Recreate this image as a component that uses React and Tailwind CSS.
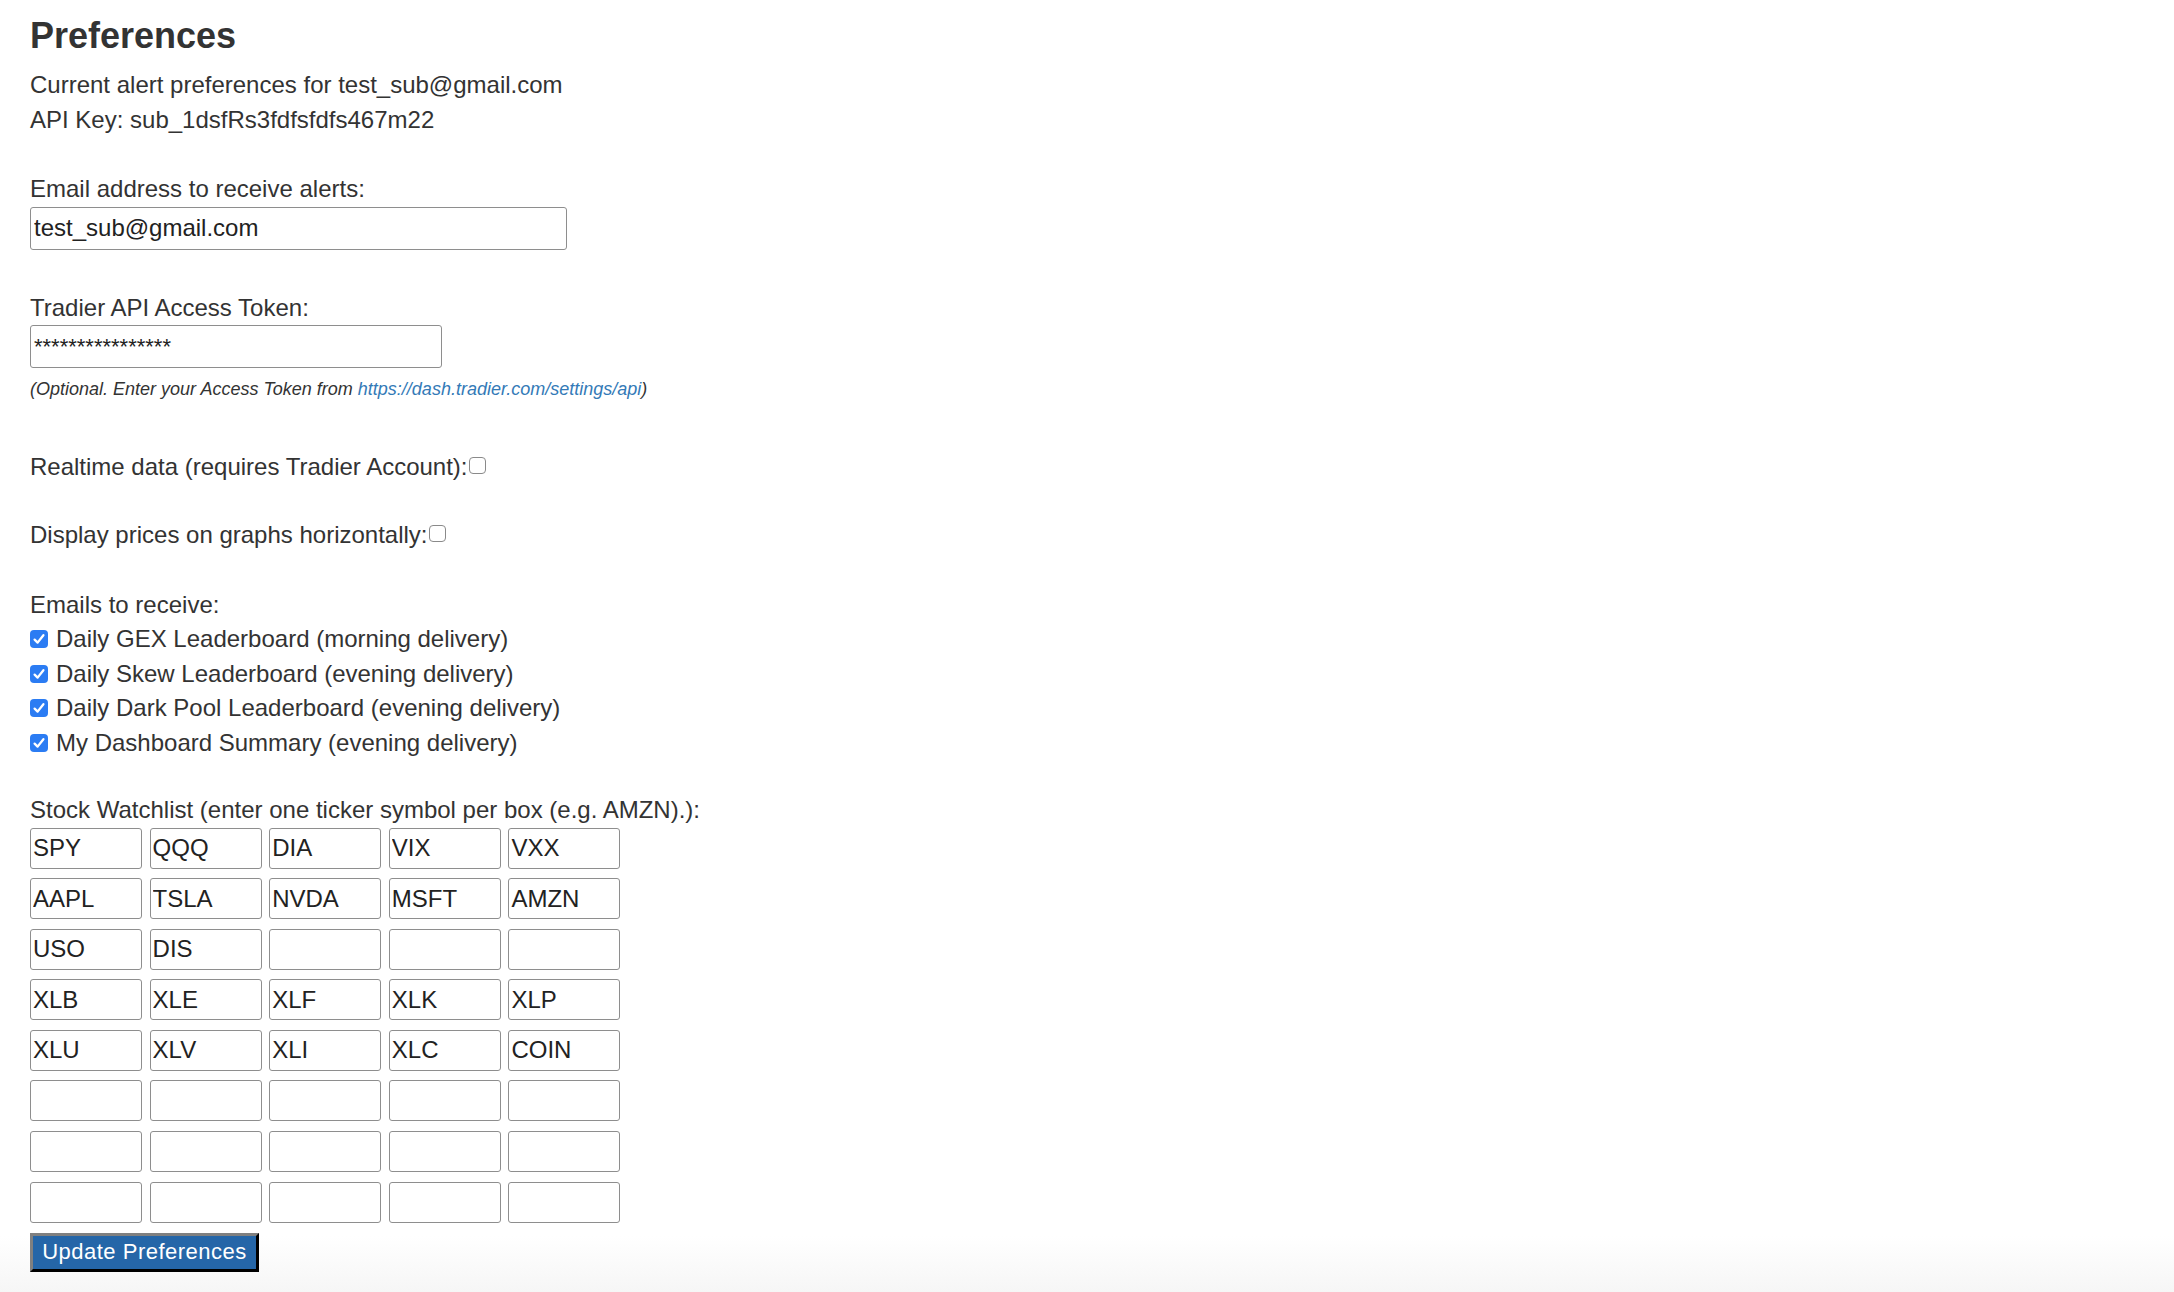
import React from "react";

const rows = [
  ["SPY", "QQQ", "DIA", "VIX", "VXX"],
  ["AAPL", "TSLA", "NVDA", "MSFT", "AMZN"],
  ["USO", "DIS", "", "", ""],
  ["XLB", "XLE", "XLF", "XLK", "XLP"],
  ["XLU", "XLV", "XLI", "XLC", "COIN"],
  ["", "", "", "", ""],
  ["", "", "", "", ""],
  ["", "", "", "", ""],
];

const emails = [
  "Daily GEX Leaderboard (morning delivery)",
  "Daily Skew Leaderboard (evening delivery)",
  "Daily Dark Pool Leaderboard (evening delivery)",
  "My Dashboard Summary (evening delivery)",
];

function CheckedBox() {
  return (
    <span className="inline-flex h-[18px] w-[18px] shrink-0 items-center justify-center rounded-[4px] bg-[#2b7cf3]">
      <svg viewBox="0 0 18 18" className="h-[18px] w-[18px]">
        <path
          d="M4.6 9.6 L7.6 12.6 L13.4 5.2"
          fill="none"
          stroke="white"
          strokeWidth="2.3"
          strokeLinecap="round"
          strokeLinejoin="round"
        />
      </svg>
    </span>
  );
}

function EmptyBox() {
  return (
    <span className="ml-[1px] mb-[3px] inline-block h-[17px] w-[17px] shrink-0 rounded-[4px] border border-[#8a8a8a] bg-white" />
  );
}

export default function App() {
  return (
    <div className="min-h-[1292px] w-full bg-[linear-gradient(to_bottom,#ffffff_0px,#ffffff_1236px,#f6f6f6_1292px)] font-['Liberation_Sans',Arial,Helvetica,sans-serif] text-[#333333]">
      <div className="flex flex-col items-start pl-[30px] pt-[16px]">
        <h1 className="text-[36px] font-bold leading-[40px]">Preferences</h1>

        <div className="mt-[12px] text-[24px] leading-[34.5px]">
          <div>Current alert preferences for test_sub@gmail.com</div>
          <div>API Key: sub_1dsfRs3fdfsfdfs467m22</div>
        </div>

        <div className="mt-[35px] text-[24px] leading-[34.5px]">
          Email address to receive alerts:
        </div>
        <input
          type="text"
          defaultValue="test_sub@gmail.com"
          className="h-[43px] w-[537px] rounded-[3px] border border-[#8e8e8e] bg-white px-[3px] text-[24px] text-[#222222] outline-none"
        />

        <div className="mt-[41px] text-[24px] leading-[34.5px]">
          Tradier API Access Token:
        </div>
        <input
          type="text"
          defaultValue="****************"
          className="h-[43px] w-[412px] rounded-[3px] border border-[#8e8e8e] bg-white px-[3px] text-[22px] text-[#222222] outline-none"
        />

        <div className="mt-[9px] text-[18px] italic leading-[24px]">
          (Optional. Enter your Access Token from{" "}
          <a href="#" className="text-[#337ab7]">
            https://dash.tradier.com/settings/api
          </a>
          )
        </div>

        <div className="mt-[49px] flex items-center text-[24px] leading-[34.5px]">
          <span>Realtime data (requires Tradier Account):</span>
          <EmptyBox />
        </div>

        <div className="mt-[33.5px] flex items-center text-[24px] leading-[34.5px]">
          <span>Display prices on graphs horizontally:</span>
          <EmptyBox />
        </div>

        <div className="mt-[35px] text-[24px] leading-[34.5px]">Emails to receive:</div>
        <div className="flex flex-col">
          {emails.map((e) => (
            <div key={e} className="flex items-center gap-[8px] text-[24px] leading-[34.5px]">
              <CheckedBox />
              <span>{e}</span>
            </div>
          ))}
        </div>

        <div className="mt-[33px] text-[24px] leading-[34.5px]">
          Stock Watchlist (enter one ticker symbol per box (e.g. AMZN).):
        </div>
        <div className="grid grid-cols-[repeat(5,112px)] gap-x-[7.6px] gap-y-[9.6px]">
          {rows.flatMap((r, i) =>
            r.map((t, j) => (
              <input
                key={`${i}-${j}`}
                type="text"
                defaultValue={t}
                className="h-[41px] w-[112px] rounded-[3px] border border-[#8e8e8e] bg-white px-[2px] text-[24px] text-[#222222] outline-none"
              />
            ))
          )}
        </div>

        <button
          type="button"
          className="mt-[10px] h-[39px] w-[229px] border-[3px] border-solid border-t-[#808080] border-l-[#808080] border-r-black border-b-black bg-[#2566a8] text-[22px] leading-none tracking-[0.5px] text-white"
        >
          Update Preferences
        </button>
      </div>
    </div>
  );
}
